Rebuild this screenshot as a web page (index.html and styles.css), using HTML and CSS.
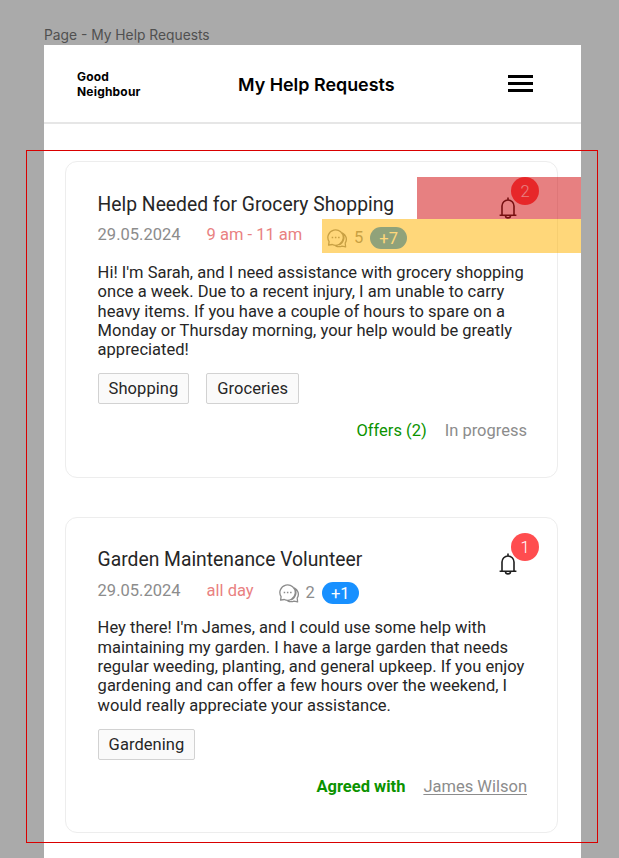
FILE: index.html
```html
<!DOCTYPE html>
<html lang="en">
<head>
<meta charset="utf-8">
<title>My Help Requests</title>
<link rel="stylesheet" href="styles.css">
</head>
<body>
<svg class="defs" width="0" height="0" aria-hidden="true">
  <symbol id="bell" viewBox="0 0 18 22">
    <path d="M9 .4V3M3 18.300V9a6 6 0 0 1 12 0v9.300M.6 18.300h16.800M6.500 18.700a2.500 2.200 0 0 0 5 0" fill="none" stroke="currentColor" stroke-width="1.600"/>
  </symbol>
  <symbol id="chat" viewBox="0 0 20 19">
    <path d="M1.600 16.200 2.100 12.700A7.700 7.700 0 1 1 5.300 15.500ZM15.200 3.800a7 7 0 0 1 3 10.200l.4 3.900-3.600-.8a8 8 0 0 1-6.500-.3M15.400 3.900a8 8 0 0 1-3.300 12" fill="none" stroke="currentColor" stroke-width="1.300" stroke-linejoin="round"/>
    <path d="M4.700 7.700h1.500v1.500H4.700ZM7.900 7.700h1.500v1.500H7.900ZM11.100 7.700h1.500v1.500h-1.500Z" fill="currentColor"/>
  </symbol>
</svg>
<div class="label">Page - My Help Requests</div>
<main class="page">
  <header class="header">
    <div class="brand">Good<br>Neighbour</div>
    <h1 class="heading">My Help Requests</h1>
    <div class="menu"><span></span><span></span><span></span></div>
  </header>
  <div class="list">
    <article class="card">
      <h2 class="title">Help Needed for Grocery Shopping</h2>
      <div class="meta"><span class="date">29.05.2024</span><span class="time time-wide">9 am - 11 am</span><svg class="chat"><use href="#chat"/></svg><span class="count">5</span><span class="pill">+7</span></div>
      <p class="text">Hi! I'm Sarah, and I need assistance with grocery shopping<br>once a week. Due to a recent injury, I am unable to carry<br>heavy items. If you have a couple of hours to spare on a<br>Monday or Thursday morning, your help would be greatly<br>appreciated!</p>
      <div class="tags"><span class="tag">Shopping</span><span class="tag">Groceries</span></div>
      <div class="status"><span class="offers">Offers (2)</span><span class="progress">In progress</span></div>
      <div class="alert"><svg class="bell"><use href="#bell"/></svg><span class="badge">2</span></div>
    </article>
    <article class="card">
      <h2 class="title">Garden Maintenance Volunteer</h2>
      <div class="meta"><span class="date">29.05.2024</span><span class="time">all day</span><svg class="chat"><use href="#chat"/></svg><span class="count">2</span><span class="pill">+1</span></div>
      <p class="text">Hey there! I'm James, and I could use some help with<br>maintaining my garden. I have a large garden that needs<br>regular weeding, planting, and general upkeep. If you enjoy<br>gardening and can offer a few hours over the weekend, I<br>would really appreciate your assistance.</p>
      <div class="tags"><span class="tag">Gardening</span></div>
      <div class="status"><span class="agreed">Agreed with</span><span class="person">James Wilson</span></div>
      <div class="alert"><svg class="bell"><use href="#bell"/></svg><span class="badge">1</span></div>
    </article>
  </div>
</main>
<div class="zone zone-red"></div>
<div class="zone zone-yellow"></div>
<div class="selection"></div>
</body>
</html>
```

FILE: styles.css
```css
* { box-sizing: border-box; }
body {
  margin: 0;
  height: 858px;
  overflow: hidden;
  position: relative;
  background: #aaa;
  font-family: Roboto, sans-serif;
  color: #262626;
}
.defs { position: absolute; }
.label {
  height: 45px;
  padding: 26px 0 0 44px;
  font: 400 13.800px/18px Inter, sans-serif;
  color: #505050;
}
.page { width: 537px; height: 813px; margin-left: 44px; background: #fff; }
.header {
  display: grid;
  grid-template-columns: 161px 1fr 73px;
  align-items: center;
  height: 79px;
  padding-left: 33px;
  border-bottom: 2px solid #e6e6e6;
  font-family: Inter, sans-serif;
  color: #000;
}
.brand { font-size: 12px; font-weight: 700; line-height: 15px; letter-spacing: 0.200px; }
.heading { margin: 2px 0 0; font-size: 17.900px; font-weight: 600; line-height: 24px; white-space: nowrap; }
.menu { display: flex; flex-direction: column; gap: 4.200px; width: 25px; }
.menu span { height: 2.800px; background: #000; }
.list { display: flex; flex-direction: column; gap: 39px; padding: 37px 0 0 21px; }
.card {
  position: relative;
  width: 492.500px;
  height: 316.500px;
  padding: 30px 29.500px 0 31.600px;
  border: 1px solid #ededed;
  border-radius: 12px;
}
.title { height: 24px; margin: 0.600px 0 0; font-size: 19.300px; font-weight: 400; line-height: 24px; white-space: nowrap; }
.meta { display: flex; align-items: center; height: 24px; margin-top: 9.400px; font-size: 16.500px; line-height: 20px; color: #8c8c8c; white-space: nowrap; }
.date { width: 109px; margin-top: -5px; }
.time { width: 72.400px; margin-top: -5px; color: #e98181; }
.time-wide { width: 120.800px; }
.chat { width: 20px; height: 19px; margin-top: 1px; }
.count { margin-left: 6.500px; }
.pill { width: 37px; height: 22px; margin-left: 7px; border-radius: 11px; background: #1890ff; color: #fff; line-height: 24px; text-align: center; }
.text { margin: 13px 0 0; font-size: 16.500px; line-height: 19.300px; letter-spacing: 0.020px; white-space: nowrap; }
.tags { display: flex; gap: 16.900px; margin-top: 14px; }
.tag { height: 31px; padding: 0 10px; border: 1px solid #d2d2d2; border-radius: 2px; background: #fafafa; font-size: 16.500px; line-height: 29px; letter-spacing: 0.060px; }
.status { display: flex; justify-content: flex-end; gap: 18px; margin-top: 17px; font-size: 16.500px; line-height: 20px; color: #8c8c8c; }
.offers, .agreed { color: #0b9300; }
.agreed { font-weight: 700; }
.person { text-decoration: underline; text-decoration-thickness: 1px; text-underline-offset: 2px; }
.alert { position: absolute; right: 17.500px; top: 15px; width: 40px; height: 44px; }
.bell { position: absolute; left: 0; top: 20px; width: 18px; height: 22px; color: #1f1f1f; }
.badge { position: absolute; left: 12px; top: 0; width: 28px; height: 28px; border-radius: 50%; background: #ff4d4f; color: #fff; font-size: 16.500px; font-weight: 300; line-height: 30px; text-align: center; }
.zone { position: absolute; }
.zone-red { left: 417px; top: 177px; width: 164px; height: 42px; background: rgba(208, 2, 4, 0.5); }
.zone-yellow { left: 322px; top: 219px; width: 259px; height: 34px; background: rgba(255, 178, 0, 0.52); }
.selection { position: absolute; left: 26px; top: 150px; width: 572px; height: 693px; border: 1px solid #d90000; }
```
